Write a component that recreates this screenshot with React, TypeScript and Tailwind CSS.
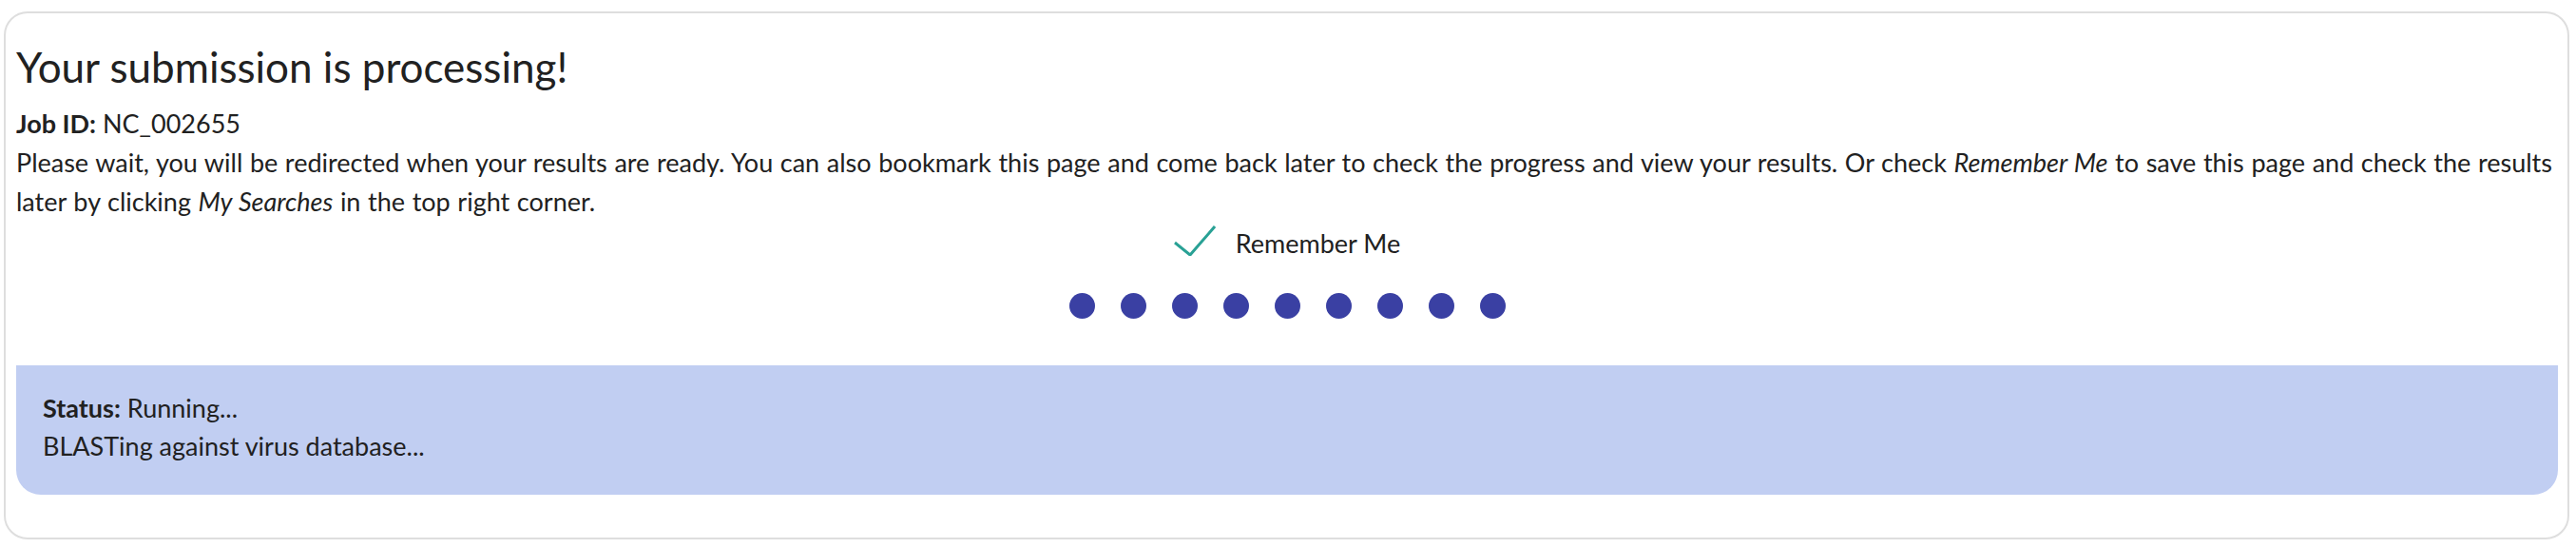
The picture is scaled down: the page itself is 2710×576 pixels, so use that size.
export default function App() {
  const dots = [0, 1, 2, 3, 4, 5, 6, 7, 8];
  return (
    <div className="min-h-[576px] bg-white pt-[12px] pl-[4px] pr-[7px] font-[Lato,sans-serif] text-[#212121]">
      <div className="rounded-[25px] border-2 border-[#dedede] pt-[30px] pl-[11px] pr-[10px] pb-[45px]">
        <h1 className="text-[44px] leading-[52px] font-normal">Your submission is processing!</h1>
        <div className="mt-[13px] text-[27px] leading-[41px]">
          <p>
            <b className="font-bold">Job ID:</b> NC_002655
          </p>
          <p className="[word-spacing:0.7px]">
            Please wait, you will be redirected when your results are ready. You can also bookmark this page and come
            back later to check the progress and view your results. Or check <i>Remember Me</i> to save this page and
            check the results later by clicking <i>My Searches</i> in the top right corner.
          </p>
        </div>
        <div className="mt-[4px] flex h-[40px] items-center justify-center gap-[21px]">
          <svg className="self-start mt-[1px]" width="44" height="32" viewBox="0 0 44 32" fill="none">
            <path d="M1 18 L17 31 L43 1" stroke="#29a195" strokeWidth="3" strokeLinecap="butt" strokeLinejoin="miter" />
          </svg>
          <span className="text-[27px] leading-[40px]">Remember Me</span>
        </div>
        <div className="mt-[32px] flex justify-center gap-[27px]">
          {dots.map((d) => (
            <div key={d} className="size-[27px] rounded-full bg-[#3a40a3] blur-[0.6px]" />
          ))}
        </div>
        <div className="mt-[49px] rounded-b-[26px] bg-[#c1cef2] pt-[25px] pb-[31px] pl-[28px] text-[27px] leading-[40px]">
          <p>
            <b className="font-bold">Status:</b> Running...
          </p>
          <p>BLASTing against virus database...</p>
        </div>
      </div>
    </div>
  );
}
